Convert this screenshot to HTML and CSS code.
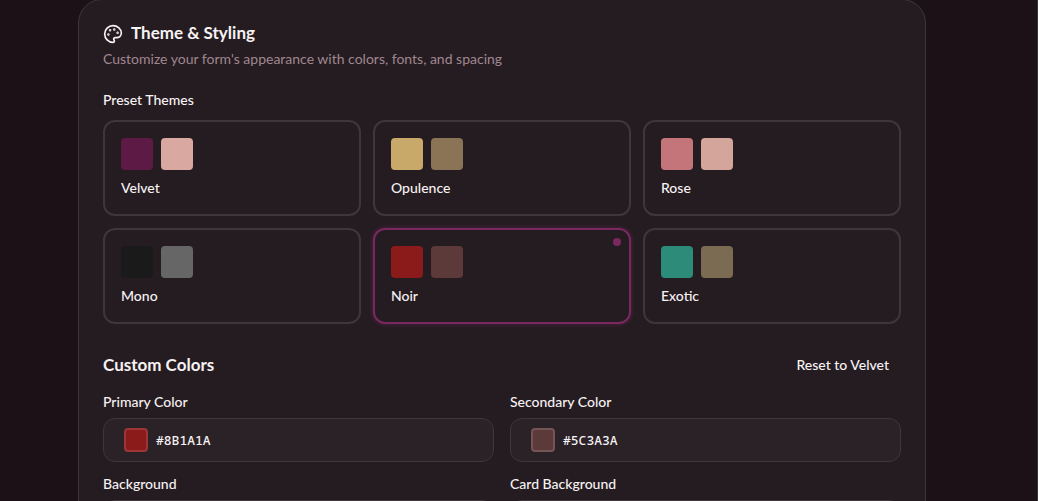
FILE: index.html
```
<!DOCTYPE html>
<html lang="en">
<head>
  <meta charset="UTF-8" />
  <meta name="viewport" content="width=device-width, initial-scale=1.0" />
  <title>Theme &amp; Styling</title>
  <link rel="stylesheet" href="styles.css">
</head>
<body>
  <main class="panel">
    <header class="panel-header">
      <h1>
        <svg class="icon" viewBox="0 0 24 24" fill="none" stroke="currentColor" stroke-width="2" stroke-linecap="round" stroke-linejoin="round" aria-hidden="true">
          <circle cx="13.5" cy="6.5" r=".5" fill="currentColor" />
          <circle cx="17.5" cy="10.5" r=".5" fill="currentColor" />
          <circle cx="8.5" cy="7.5" r=".5" fill="currentColor" />
          <circle cx="6.5" cy="12.5" r=".5" fill="currentColor" />
          <path d="M12 2C6.5 2 2 6.5 2 12s4.5 10 10 10c.926 0 1.648-.746 1.648-1.688 0-.437-.18-.835-.437-1.125-.29-.289-.438-.652-.438-1.125a1.64 1.64 0 0 1 1.668-1.668h1.996c3.051 0 5.555-2.503 5.555-5.554C21.965 6.012 17.461 2 12 2z" />
        </svg>
        Theme &amp; Styling
      </h1>
      <p>Customize your form's appearance with colors, fonts, and spacing</p>
    </header>

    <!-- Preset themes -->
    <section>
      <h2 class="label">Preset Themes</h2>
      <div class="themes">
        <button type="button" class="theme velvet">
          <span class="swatches"><span class="swatch"></span><span class="swatch"></span></span>
          Velvet
        </button>
        <button type="button" class="theme opulence">
          <span class="swatches"><span class="swatch"></span><span class="swatch"></span></span>
          Opulence
        </button>
        <button type="button" class="theme rose">
          <span class="swatches"><span class="swatch"></span><span class="swatch"></span></span>
          Rose
        </button>
        <button type="button" class="theme mono">
          <span class="swatches"><span class="swatch"></span><span class="swatch"></span></span>
          Mono
        </button>
        <button type="button" class="theme noir selected" aria-pressed="true">
          <span class="swatches"><span class="swatch"></span><span class="swatch"></span></span>
          Noir
        </button>
        <button type="button" class="theme exotic">
          <span class="swatches"><span class="swatch"></span><span class="swatch"></span></span>
          Exotic
        </button>
      </div>
    </section>

    <!-- Custom colors -->
    <section class="custom">
      <div class="custom-header">
        <h2>Custom Colors</h2>
        <button type="button" class="reset">Reset to Velvet</button>
      </div>
      <div class="fields">
        <div class="field">
          <label class="label" for="primary">Primary Color</label>
          <button type="button" id="primary" class="picker">
            <span class="chip chip-primary"></span>#8B1A1A
          </button>
        </div>
        <div class="field">
          <label class="label" for="secondary">Secondary Color</label>
          <button type="button" id="secondary" class="picker">
            <span class="chip chip-secondary"></span>#5C3A3A
          </button>
        </div>
        <div class="field">
          <label class="label" for="background">Background</label>
          <button type="button" id="background" class="picker"></button>
        </div>
        <div class="field">
          <label class="label" for="card-background">Card Background</label>
          <button type="button" id="card-background" class="picker"></button>
        </div>
      </div>
    </section>
  </main>
</body>
</html>
```
FILE: styles.css
```
* {
  box-sizing: border-box;
}

html {
  overflow: hidden;
}

body {
  margin: 0;
  padding: 0 111px 0 78px;
  border-right: 1px solid #39343a;
  background: #1b1116;
  color: #f7f2f3;
  font-family: Lato, "Open Sans", sans-serif;
  font-size: 14px;
  line-height: 20px;
}

h1,
h2,
p {
  margin: 0;
}

button {
  font: inherit;
  font-weight: 500;
  color: inherit;
  cursor: pointer;
}

.panel {
  margin-top: -1px;
  padding: 24px;
  border: 1px solid #3d363b;
  border-radius: 24px;
  background: #251c21;
}

.panel-header {
  margin-bottom: 24px;
}

h1 {
  display: flex;
  align-items: flex-start;
  gap: 8px;
  font-size: 17px;
  line-height: 18px;
  font-weight: 700;
}

.icon {
  width: 20px;
  height: 20px;
}

.panel-header p {
  margin-top: 5px;
  color: #a08790;
}

.label {
  display: block;
  font-size: 14px;
  line-height: 14px;
  font-weight: 500;
}

.themes {
  display: grid;
  grid-template-columns: repeat(3, 1fr);
  gap: 12px;
  margin-top: 13px;
}

.theme {
  position: relative;
  padding: 16px;
  border: 2px solid #3d363b;
  border-radius: 12px;
  background: none;
  text-align: left;
}

.swatches {
  display: flex;
  gap: 8px;
  margin-bottom: 8px;
}

.swatch {
  width: 32px;
  height: 32px;
  border-radius: 4px;
}

.velvet .swatch:first-child { background: #5c1a44; }
.velvet .swatch:last-child { background: #d9a8a0; }
.opulence .swatch:first-child { background: #c9a96a; }
.opulence .swatch:last-child { background: #8b7355; }
.rose .swatch:first-child { background: #c4757a; }
.rose .swatch:last-child { background: #d4a59a; }
.mono .swatch:first-child { background: #1a1a1a; }
.mono .swatch:last-child { background: #666666; }
.noir .swatch:first-child { background: #8b1a1a; }
.noir .swatch:last-child { background: #5c3a3a; }
.exotic .swatch:first-child { background: #2d8b7a; }
.exotic .swatch:last-child { background: #7a6b52; }

.selected {
  border-color: #7a2860;
  box-shadow: 0 0 4px rgba(122, 40, 96, 0.6);
}

.selected::after {
  content: "";
  position: absolute;
  top: 8px;
  right: 8px;
  width: 8px;
  height: 8px;
  border-radius: 50%;
  background: #7a2860;
}

.custom {
  margin-top: 23px;
}

.custom-header {
  display: flex;
  align-items: center;
  justify-content: space-between;
  margin-bottom: 12px;
}

.custom-header h2 {
  font-size: 17px;
  font-weight: 700;
}

.reset {
  padding: 8px 12px;
  border: 0;
  background: none;
}

.fields {
  display: grid;
  grid-template-columns: 1fr 1fr;
  gap: 15px 16px;
}

.picker {
  display: flex;
  align-items: center;
  gap: 8px;
  width: 100%;
  height: 44px;
  margin-top: 9px;
  padding: 0 20px;
  border: 1px solid #3d363b;
  border-radius: 12px;
  background: #2b2227;
  font-family: "Noto Sans Mono", "DejaVu Sans Mono", monospace;
  font-size: 13px;
}

.chip {
  width: 24px;
  height: 24px;
  border: 2px solid;
  border-radius: 4px;
}

.chip-primary {
  background: #8b1a1a;
  border-color: #9a3636;
}

.chip-secondary {
  background: #5c3a3a;
  border-color: #745454;
}
```
